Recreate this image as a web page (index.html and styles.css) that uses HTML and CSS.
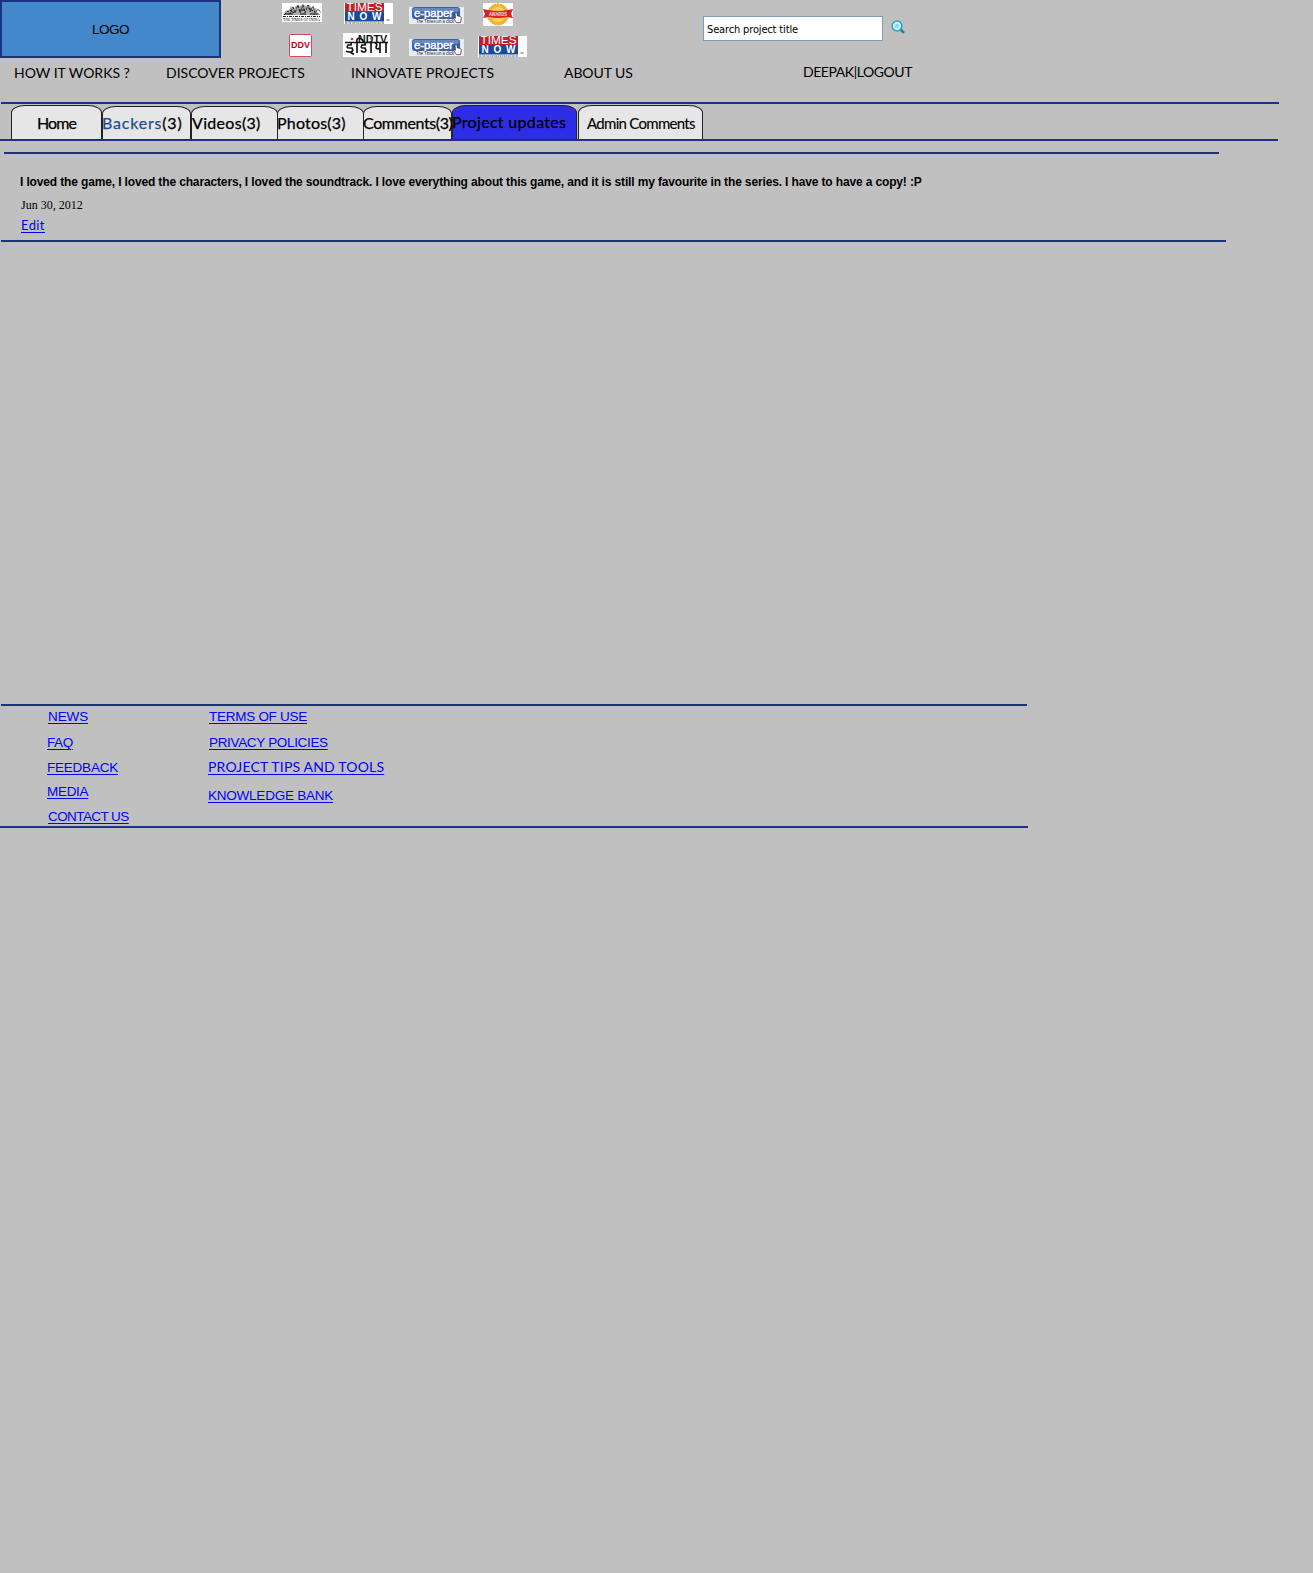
FILE: index.html
```
<!DOCTYPE html>
<html lang="en">
<head>
<meta charset="utf-8">
<title>Project updates</title>
<link rel="stylesheet" href="styles.css">
</head>
<body>
<svg class="defs" width="0" height="0" aria-hidden="true">
  <defs>
    <symbol id="times-now" viewBox="0 0 49 21">
      <rect width="49" height="21" fill="#fff"/>
      <rect x="1" width="39" height="9" fill="#c3202d"/>
      <rect x="1" y="9" width="39" height="9.500" fill="#174a9c"/>
      <text x="2.500" y="8" font-size="10" textLength="36" lengthAdjust="spacingAndGlyphs" fill="#fff">TIMES</text>
      <text x="3.500" y="17.300" font-size="10" font-weight="bold" textLength="34" fill="#fff">NOW</text>
      <path d="M1 20h39" stroke="#555" stroke-width="1" stroke-dasharray="2 .6 1 .5"/>
      <text x="41.500" y="18" font-size="4" font-style="italic" fill="#333">.tv</text>
    </symbol>
    <symbol id="e-paper" viewBox="0 0 55 17">
      <rect width="55" height="17" fill="#e9edf5"/>
      <rect x="3" y="0" width="48" height="12" rx="3" fill="#3a5ea8"/>
      <rect x="4" y="1" width="46" height="4" rx="2" fill="#6787c2"/>
      <text x="5" y="9.500" font-size="10" textLength="39" lengthAdjust="spacingAndGlyphs" fill="#fff" stroke="#fff" stroke-width=".4">e-paper</text>
      <text x="7" y="15.800" font-size="4.500" textLength="38" lengthAdjust="spacingAndGlyphs" fill="#223">The Times on a click</text>
      <path d="M46 5.500q1.200-1 1.800.3l.6 3 3 .8q1.200.6.8 2l-.7 4h-4l-2.800-4q.3-1.200 1.700-.4z" fill="#fff" stroke="#223" stroke-width=".7"/>
    </symbol>
  </defs>
</svg>

<header class="header">
  <div class="logo">LOGO</div>
  <div class="press">
    <div class="press-row">
      <svg class="toi" viewBox="0 0 40 19">
        <rect width="40" height="19" fill="#fff"/>
        <path d="M1 12q2-5 6-5l2-4 3 2 3-3 3 1 3-2 3 2 4-1 2 4 4-1 1 4 4 3z" fill="#aaa"/>
        <path d="M2 12l4-4 2 3 3-7 2 6 3-8 2 8 3-8 2 8 3-8 2 7 3-6 2 7 3-4 3 4" stroke="#111" stroke-width=".8" stroke-dasharray="3 1" fill="none"/>
        <path d="M3 11h8m6-4h6m5 4h8M8 7l4 3m6 1h6m3-6l4 3" stroke="#111" fill="none"/>
        <path d="M1 13.500h37" stroke="#222" stroke-dasharray="3 1 1 1"/>
        <text x="1" y="17.800" font-size="4" font-family="Liberation Serif, serif" textLength="37" lengthAdjust="spacingAndGlyphs">THE TIMES OF INDIA</text>
      </svg>
      <svg class="times"><use href="#times-now"/></svg>
      <svg class="paper"><use href="#e-paper"/></svg>
      <svg class="badge" viewBox="0 0 30 23">
        <rect width="30" height="23" fill="#fff"/>
        <circle cx="15" cy="11.500" r="10.500" fill="#f1b62c" stroke="#dc9a1d" stroke-dasharray="2 1"/>
        <circle cx="15" cy="11.500" r="7.500" fill="#f7d35b"/>
        <path d="M0 6l5 1q10 2 20 0l5-1-2 5 2 4-6-1q-9 2-18 0l-6 1 2-4z" fill="#d81f2b"/>
        <text x="6" y="12.700" font-size="5" font-weight="bold" textLength="18" lengthAdjust="spacingAndGlyphs" fill="#fbdcd4">AWARDS</text>
      </svg>
    </div>
    <div class="press-row second">
      <svg class="ddv" viewBox="0 0 23 23">
        <rect x=".5" y=".5" width="22" height="22" rx="1" fill="#fff" stroke="#d04a57"/>
        <text x="2" y="14" font-size="9" font-weight="bold" textLength="19" lengthAdjust="spacingAndGlyphs" fill="#c4001d">DDV</text>
      </svg>
      <svg class="ndtv" viewBox="0 0 47 24">
        <rect width="47" height="24" fill="#fff"/>
        <text x="15" y="9.500" font-size="10" font-weight="bold" textLength="29" lengthAdjust="spacingAndGlyphs" fill="#161616">NDTV</text>
        <circle cx="28" cy="5.500" r="1" fill="#d22"/>
        <path d="M2 9.500h43M8 9.500v2.500H5q-2 3 1 3h3q2 4-2 4-3 0-4-1m4 1l4 2.500M14 20V9.500q-1-5 3-4 3 1 4 4M22 9.500v2.500h-3q-2 3 1 3h2q2 4-1 4-2 0-3-1.500M28 9.500V20M32 10q3 1 1 4 0 3 4 1m0-5.500V20M43 9.500V20" fill="none" stroke="#151515" stroke-width="1.700"/>
        <circle cx="9" cy="6" r="1.300" fill="#d33"/>
      </svg>
      <svg class="paper"><use href="#e-paper"/></svg>
      <svg class="times"><use href="#times-now"/></svg>
    </div>
  </div>
  <form class="search">
    <input class="search-field" type="text" value="Search project title" aria-label="Search project title">
    <svg class="search-icon" viewBox="0 0 14 14">
      <path d="M9 9l4 3.800" stroke="#1e86a5" stroke-width="2.500"/>
      <circle cx="6" cy="6" r="4.900" fill="#c9f2fb" stroke="#2aa0be" stroke-width="1.500"/>
      <circle cx="6" cy="6" r="2.300" fill="#8edcf0"/>
    </svg>
  </form>
</header>

<nav class="main-nav">
  <span class="how">HOW IT WORKS ?</span>
  <span class="discover">DISCOVER PROJECTS</span>
  <span class="innovate">INNOVATE PROJECTS</span>
  <span class="about">ABOUT US</span>
  <span class="account">DEEPAK|LOGOUT</span>
</nav>

<div class="tabs">
  <div class="tab home"><span>Home</span></div>
  <div class="tab backers"><span><b>Backers</b>(3)</span></div>
  <div class="tab videos"><span>Videos(3)</span></div>
  <div class="tab photos"><span>Photos(3)</span></div>
  <div class="tab comments"><span>Comments(3)</span></div>
  <div class="tab updates"><span>Project updates</span></div>
  <div class="tab admin"><span>Admin Comments</span></div>
</div>
<div class="rule under-tabs"></div>

<main class="update">
  <div class="rule update-top"></div>
  <p class="message">I loved the game, I loved the characters, I loved the soundtrack. I love everything about this game, and it is still my favourite in the series. I have to have a copy! :P</p>
  <p class="date">Jun 30, 2012</p>
  <p class="edit"><a href="#">Edit</a></p>
  <div class="rule update-bottom"></div>
</main>

<footer class="footer">
  <div class="links left">
    <a class="news" href="#">NEWS</a>
    <a class="faq" href="#">FAQ</a>
    <a class="feedback" href="#">FEEDBACK</a>
    <a class="media" href="#">MEDIA</a>
    <a class="contact" href="#">CONTACT US</a>
  </div>
  <div class="links right">
    <a class="terms" href="#">TERMS OF USE</a>
    <a class="privacy" href="#">PRIVACY POLICIES</a>
    <a class="tips" href="#">PROJECT TIPS AND TOOLS</a>
    <a class="knowledge" href="#">KNOWLEDGE BANK</a>
  </div>
</footer>
<div class="rule footer-bottom"></div>
</body>
</html>
```
FILE: styles.css
```
* { box-sizing: border-box; }
body {
  margin: 0;
  min-height: 1573px;
  background: #c0c0c0;
  color: #000;
  font-family: "Liberation Sans", Arial, sans-serif;
  font-size: 13.5px;
}
p { margin: 0; }
svg { display: block; flex: none; }
.defs { position: absolute; }
.rule { height: 2px; background: #1b3281; }

.header { display: flex; height: 58px; }
.logo {
  width: 221px;
  height: 58px;
  border: 2px solid #1b3281;
  background: #4488cc;
  text-align: center;
  line-height: 55px;
  letter-spacing: -0.5px;
}
.press { width: 482px; padding: 3px 0 0 61px; }
.press-row { display: flex; height: 30px; }
.press-row.second { padding-left: 7px; }
.toi { width: 40px; height: 19px; }
.times { width: 49px; height: 21px; margin-left: 22px; }
.paper { width: 55px; height: 17px; margin: 4px 0 0 16px; }
.badge { width: 30px; height: 23px; margin-left: 19px; }
.ddv { width: 23px; height: 23px; margin-top: 1px; }
.ndtv { width: 47px; height: 24px; margin-left: 31px; }
.second .paper { margin: 6px 0 0 19px; }
.second .times { margin: 3px 0 0 14px; }
.search { display: flex; padding-top: 16px; margin: 0; }
.search-field {
  width: 180px;
  height: 25px;
  padding: 1px 3px 0;
  border: 1px solid #7b9ebd;
  border-radius: 0;
  background: #fff;
  color: #000;
  font: 11px "DejaVu Sans Condensed", Tahoma, sans-serif;
  letter-spacing: -0.15px;
}
.search-icon { width: 14px; height: 14px; margin: 4px 0 0 8px; }

.main-nav {
  display: flex;
  height: 44px;
  padding: 5px 0 0 14px;
  font: 14px/20px Lato, sans-serif;
  white-space: nowrap;
}
.how { width: 152px; }
.discover { width: 185px; }
.innovate { width: 213px; letter-spacing: 0.18px; }
.about { width: 239px; letter-spacing: -0.08px; }
.account { margin-top: -1px; letter-spacing: -0.44px; }

.tabs {
  display: flex;
  align-items: flex-end;
  width: 1278px;
  height: 37px;
  margin-left: 1px;
  padding-left: 10px;
  border-top: 2px solid #1b3281;
}
.tab {
  flex: none;
  height: 33px;
  border: 1px solid #222;
  border-bottom: 0;
  border-radius: 14px 14px 0 0 / 8px 8px 0 0;
  background: #e6e6e6;
  font: 16px/20px Lato, sans-serif;
  white-space: nowrap;
  -webkit-text-stroke: 0.25px currentColor;
}
.tab span { display: block; margin-left: -1px; padding-top: 6px; }
.tab b { font-weight: normal; color: #1f4e8c; }
.home { width: 91px; height: 34px; padding: 1px 0 0 26px; letter-spacing: -0.9px; }
.backers { width: 89px; letter-spacing: 0.8px; }
.videos { width: 87px; letter-spacing: 0.3px; }
.videos span { margin-left: 0; }
.photos { width: 87px; margin-left: -1px; letter-spacing: 0.2px; }
.comments { width: 89px; margin-left: -1px; letter-spacing: -0.38px; }
.updates {
  width: 125px;
  height: 34px;
  background: #2d2de6;
  letter-spacing: 0.32px;
}
.admin {
  width: 125px;
  height: 34px;
  margin-left: 1px;
  padding: 1px 0 0 9px;
  font-size: 15px;
  letter-spacing: -0.7px;
  -webkit-text-stroke-width: 0.1px;
}
.under-tabs { width: 1278px; }

.update { padding-top: 11px; }
.update-top { width: 1215px; margin-left: 4px; }
.message {
  margin: 20px 0 0 20px;
  font-size: 12px;
  font-weight: bold;
  line-height: 16px;
  letter-spacing: -0.141px;
  white-space: nowrap;
}
.date {
  margin: 7px 0 0 21px;
  font: 12px/16px "Liberation Serif", "Times New Roman", serif;
}
.edit {
  margin: 3px 0 0 21px;
  font: 13px/18px Lato, sans-serif;
  letter-spacing: 0.4px;
}
.update-bottom { width: 1225px; margin: 6px 0 0 1px; }
a { color: #00f; text-underline-offset: 2px; text-decoration-thickness: 1px; }

.footer {
  display: flex;
  width: 1026px;
  height: 122px;
  margin: 462px 0 0 1px;
  padding-top: 3px;
  border-top: 2px solid #1b3281;
  line-height: 16px;
}
.links { display: flex; flex-direction: column; align-items: flex-start; white-space: nowrap; }
.left { width: 161px; padding-left: 46px; }
.left a:first-child, .contact { margin-left: 1px; }
.news { letter-spacing: -0.12px; }
.faq { margin-top: 10px; letter-spacing: -0.4px; }
.feedback { margin-top: 9px; letter-spacing: -0.22px; }
.media { margin-top: 8px; letter-spacing: -0.3px; }
.contact { margin-top: 9px; letter-spacing: -0.58px; }
.right { padding-left: 46px; }
.terms, .privacy { margin-left: 1px; }
.terms { letter-spacing: -0.27px; }
.privacy { margin-top: 10px; letter-spacing: -0.33px; }
.tips { margin-top: 8px; font: 14px/16px Lato, sans-serif; letter-spacing: 0.18px; }
.knowledge { margin-top: 13px; letter-spacing: -0.23px; }
.footer-bottom { width: 1028px; }
```
